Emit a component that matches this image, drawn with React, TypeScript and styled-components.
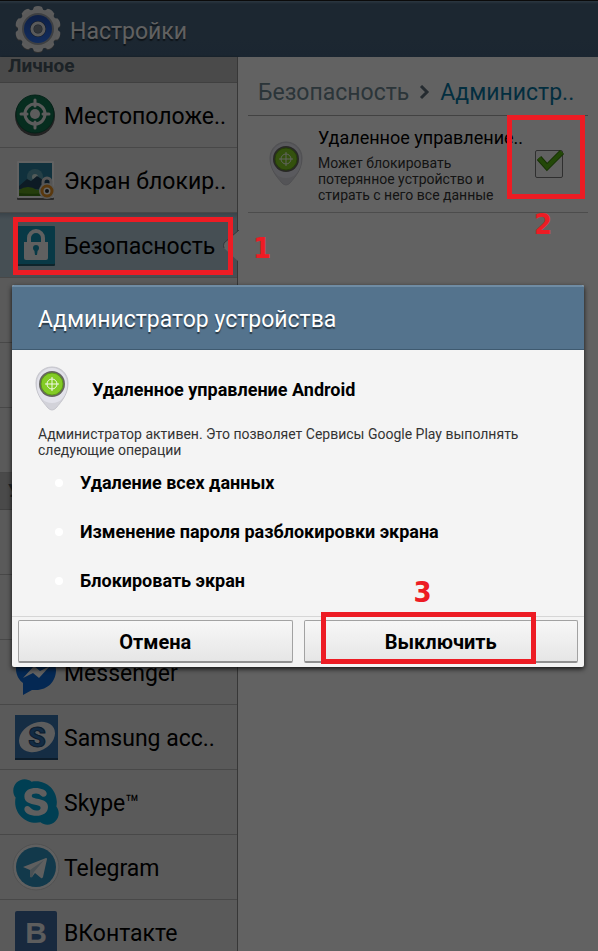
import React from "react";
import styled, { createGlobalStyle, css } from "styled-components";
import { FaSkype } from "react-icons/fa";

const GlobalStyle = createGlobalStyle`
  * { box-sizing: border-box; }
  body { margin: 0; font-family: Roboto, "Noto Sans", sans-serif; background: #f5f5f5; }
  h1, h2, p, ul { margin: 0; padding: 0; font-weight: 400; }
`;

const Screen = styled.div`
  position: relative;
  display: flex;
  flex-direction: column;
  height: 100vh;
  min-height: 600px;
  overflow: hidden;
`;

const TopBar = styled.header`
  display: flex;
  flex: none;
  align-items: center;
  gap: 8px;
  height: 57px;
  padding: 0 14px;
  border-top: 1px solid #1c1c1c;
  background: linear-gradient(#6d8aa2 0, #48637b 3px, #45607a 100%);
  color: #f2f2f2;
`;

const AppTitle = styled.h1`
  padding-top: 6px;
  font-size: 23px;
  line-height: 28px;
  text-shadow: 0 2px 1px rgba(0, 0, 0, 0.5);
`;

const Columns = styled.div`
  display: flex;
  flex: 1;
  min-height: 0;
`;

const Sidebar = styled.nav`
  flex: 0 0 238px;
  background: #e2e2e2;
  border-right: 1px solid #8a8a8a;
  box-shadow: 1px 0 2px rgba(0, 0, 0, 0.35);
`;

const SectionTitle = styled.h2<{ $clipped?: boolean }>`
  display: flex;
  align-items: ${(p) => (p.$clipped ? "flex-end" : "center")};
  height: ${(p) => (p.$clipped ? 26 : 37)}px;
  padding: 0 8px ${(p) => (p.$clipped ? 4 : 0)}px;
  background: #b8b8b8;
  border-bottom: 1px solid #a0a0a0;
  color: #46555f;
  font-size: 19px;
  font-weight: 700;
  line-height: 24px;
`;

const NavRow = styled.a<{ $selected?: boolean }>`
  position: relative;
  display: flex;
  align-items: center;
  height: 65px;
  padding-left: 12px;
  border-bottom: 1px solid #b4b4b4;
  color: #000;
  font-size: 23px;
  line-height: 28px;
  text-decoration: none;
  ${(p) =>
    p.$selected &&
    css`
      background: linear-gradient(#93a9b7, #aec5d3 6px);
    `}
`;

const RowIcon = styled.span`
  display: flex;
  flex: none;
  width: 52px;
  svg { display: block; }
`;

const RowLabel = styled.span`
  padding-top: 4px;
`;

const Notch = styled.svg`
  position: absolute;
  right: -2px;
  top: 17px;
`;

const Content = styled.main`
  flex: 1;
  min-width: 0;
  padding: 12px 10px;
  background: #f6f6f6;
`;

const Breadcrumb = styled.nav`
  display: flex;
  align-items: center;
  gap: 10px;
  height: 47px;
  padding: 2px 0 0 10px;
  border-bottom: 1px solid #a5a5a5;
  font-size: 23px;
  line-height: 28px;
  color: #6c8490;
  a { color: inherit; text-decoration: none; }
`;

const Current = styled.span`
  color: #08749f;
`;

const AdminRow = styled.label`
  display: flex;
  align-items: center;
  height: 97px;
  padding: 0 25px 0 21px;
  border-bottom: 1px solid #bdbdbd;
`;

const AdminText = styled.span`
  flex: 1;
  min-width: 0;
  padding-left: 15px;
  padding-bottom: 2px;
  white-space: nowrap;
`;

const AdminName = styled.span`
  display: block;
  font-size: 18px;
  line-height: 28px;
  color: #000;
`;

const AdminNote = styled.span`
  display: block;
  padding-top: 3px;
  font-size: 14px;
  line-height: 16px;
  color: #333;
  white-space: normal;
  max-width: 184px;
`;

const CheckWrap = styled.span`
  position: relative;
  display: block;
  flex: none;
  width: 28px;
  height: 28px;
  svg { position: absolute; left: 2px; top: -1px; pointer-events: none; }
`;

const Check = styled.input`
  appearance: none;
  display: block;
  width: 28px;
  height: 28px;
  margin: 0;
  border: 1px solid #777;
  border-radius: 2px;
  background: #f2f2f2;
`;

const Scrim = styled.div`
  position: absolute;
  inset: 0;
  z-index: 1;
  display: flex;
  align-items: center;
  padding: 1px 14px 0 12px;
  background: rgba(0, 0, 0, 0.6);
`;

const Dialog = styled.section`
  flex: 1;
  border-radius: 2px;
  background: #f4f4f4;
  box-shadow: 0 2px 5px rgba(0, 0, 0, 0.8);
`;

const DialogTitle = styled.h2`
  display: flex;
  align-items: center;
  height: 65px;
  padding: 2px 26px 0;
  border-top: 2px solid #6f8ca4;
  border-bottom: 1px solid #3f5a70;
  border-radius: 2px 2px 0 0;
  background: #54738d;
  color: #fff;
  font-size: 23px;
  text-shadow: 0 2px 1px rgba(0, 0, 0, 0.5);
`;

const DialogBody = styled.div`
  padding: 17px 26px 11px 23px;
`;

const AppLine = styled.div`
  display: flex;
  align-items: center;
  gap: 23px;
  height: 46px;
  font-size: 18px;
  font-weight: 700;
  padding-bottom: 2px;
`;

const Explanation = styled.p`
  padding: 13px 0 0 3px;
  color: #333;
  font-size: 14px;
  line-height: 16px;
`;

const Operations = styled.ul`
  list-style: none;
`;

const Operation = styled.li`
  display: flex;
  align-items: center;
  gap: 17px;
  height: 49px;
  padding-left: 20px;
  font-size: 18px;
  font-weight: 700;
  &::before {
    content: "";
    width: 8px;
    height: 8px;
    border-radius: 50%;
    background: #fff;
  }
`;

const Actions = styled.div`
  display: grid;
  grid-template-columns: 1fr 1fr;
  gap: 11px;
  padding: 3px 6px 4px;
  border-top: 1px solid #d6d6d6;
`;

const Action = styled.button`
  position: relative;
  height: 43px;
  padding: 2px 0 0;
  border: 1px solid #a2a2a2;
  border-bottom: 2px solid #909090;
  border-radius: 2px;
  background: linear-gradient(#f7f7f7, #e6e6e6);
  color: #000;
  font: 700 20px Roboto, "Noto Sans", sans-serif;
`;

const marks = {
  row: css`left: 13px; right: 4px; top: 4px; height: 58px;`,
  check: css`left: -28px; top: -35px; width: 78px; height: 84px;`,
  action: css`left: 16px; right: 41px; top: -9px; height: 52px;`,
};

const digits = {
  row: css`left: 253px; top: 18px;`,
  check: css`left: -1px; top: 57px;`,
  action: css`left: 109px; top: -46px;`,
};

const Frame = styled.span<{ $at: keyof typeof marks }>`
  position: absolute;
  z-index: 3;
  border: 5px solid #ed1c24;
  pointer-events: none;
  ${(p) => marks[p.$at]}
`;

const Digit = styled.span<{ $at: keyof typeof digits }>`
  position: absolute;
  z-index: 3;
  color: #ed1c24;
  font: 700 29px/34px "DejaVu Sans Condensed", "DejaVu Sans", sans-serif;
  pointer-events: none;
  ${(p) => digits[p.$at]}
`;

function Mark({ at, n }: { at: keyof typeof marks; n: number }) {
  return (
    <>
      <Frame $at={at} />
      <Digit $at={at}>{n}</Digit>
    </>
  );
}

const teeth = Array.from({ length: 10 }, (_, i) => (
  <path key={i} d="M-6-17L-4-22q4-2 8 0l2 5z" transform={`rotate(${i * 36})`} />
));

const GearIcon = () => (
  <svg width="48" height="48" viewBox="-24 -24 48 48">
    <defs>
      <linearGradient id="hub" x1="0" y1="0" x2="0" y2="1">
        <stop offset="0" stopColor="#234fae" />
        <stop offset="1" stopColor="#2f70e8" />
      </linearGradient>
    </defs>
    <g fill="#777" transform="translate(0 1)">{teeth}</g>
    <g fill="#e6e6e6">{teeth}</g>
    <circle r="20" fill="#e2e2e2" />
    <circle r="16" fill="#9a9fa6" />
    <circle r="14" fill="url(#hub)" />
    <circle r="8" fill="#3b4a63" />
    <circle r="6" fill="none" stroke="#e4e4e4" strokeWidth="3" />
    <circle r="4" fill="#7d8690" />
  </svg>
);

const LocationIcon = () => (
  <svg width="46" height="46" viewBox="0 0 46 46">
    <circle cx="23" cy="24" r="20" fill="#555" />
    <circle cx="23" cy="22" r="19" fill="#11714f" stroke="#0b543b" />
    <g fill="none" stroke="#e5e5e5" strokeWidth="3" strokeLinecap="round">
      <circle cx="23" cy="22" r="10" />
      <path d="M23 8v6M23 30v6M9 22h6M31 22h6" />
    </g>
    <circle cx="23" cy="22" r="5" fill="#e5e5e5" />
  </svg>
);

const LockScreenIcon = () => (
  <svg width="46" height="46" viewBox="0 0 46 46">
    <rect x="5" y="5" width="37" height="38" rx="1" fill="#666" />
    <rect x="5" y="4" width="37" height="37" rx="1" fill="#f4f4f4" />
    <rect x="7" y="6" width="33" height="33" fill="#2a7c99" />
    <circle cx="23" cy="20" r="8" fill="#5c9fae" />
    <circle cx="23" cy="20" r="3" fill="#d0e4df" />
    <path d="M7 29l8-7 4 2 6-5 6 4 4-2 5 5v6H7z" fill="#21455d" />
    <path d="M7 33q9-6 18 0l15-3v9H7z" fill="#5d9a20" />
    <path d="M7 36q12 2 33-1v4H7z" fill="#407916" />
    <path d="M31 28v-3a4 4 0 0 1 8 0v3" fill="none" stroke="#d5d5d5" strokeWidth="3" />
    <circle cx="35" cy="34" r="8" fill="#ddd" />
    <circle cx="35" cy="34" r="5" fill="#fff" stroke="#df8d24" strokeWidth="3" />
    <circle cx="35" cy="34" r="2" fill="#333" />
  </svg>
);

const SecurityIcon = () => (
  <svg width="46" height="46" viewBox="0 0 46 46">
    <rect x="4" y="5" width="39" height="39" rx="1" fill="#225b6b" />
    <rect x="4" y="4" width="39" height="38" rx="1" fill="#1690ae" />
    <path d="M17 21v-5a7 7 0 0 1 14 0v5" fill="none" stroke="#f0f0f0" strokeWidth="4" />
    <path d="M12 20h24v16q0 2-2 2H14q-2 0-2-2z" fill="#f0f0f0" />
    <circle cx="24" cy="26" r="3" fill="#1690ae" />
    <path d="M22 26h4l-1 7h-2z" fill="#1690ae" />
  </svg>
);

const MessengerIcon = () => (
  <svg width="46" height="46" viewBox="0 0 46 46">
    <path d="M24 2C12 2 4 10 4 20c0 6 3 11 7 14v12l9-5q2 0 4 0c12 0 20-9 20-20S36 2 24 2z" fill="#0a64cf" />
    <path d="M11 29L22 17l6 5 10-5-11 12-6-5z" fill="#f4f4f4" />
  </svg>
);

const SamsungIcon = () => (
  <svg width="46" height="46" viewBox="0 0 46 46">
    <rect x="3" y="3" width="43" height="43" fill="#204869" />
    <rect x="3" y="1" width="43" height="43" fill="#3570ab" />
    <ellipse cx="25" cy="23" rx="19" ry="14" fill="#e8e8e8" transform="rotate(-28 25 23)" />
    <text x="25" y="33" textAnchor="middle" fontFamily="Roboto, sans-serif" fontWeight="900" fontSize="28" fill="#2d6cab" stroke="#1c456e">S</text>
  </svg>
);

const SkypeIcon = () => (
  <svg width="48" height="48" viewBox="0 0 48 48">
    <circle cx="24" cy="24" r="15" fill="#eee" />
    <FaSkype x="-2" y="-2" size={52} color="#009fcf" />
  </svg>
);

const TelegramIcon = () => (
  <svg width="48" height="48" viewBox="0 0 48 48">
    <circle cx="24" cy="24" r="23" fill="#f0f0f0" stroke="#c9c9c9" />
    <circle cx="24" cy="24" r="20" fill="#2d8ebb" />
    <path d="M11 24l23-9q1 0 1 1l-4 18q-1 2-2 1l-6-5-3 4q-2 1-2-1v-6z" fill="#eee" />
    <path d="M18 27l14-10-10 12-2 5q-2 1-2-1z" fill="#b9cbd5" />
  </svg>
);

const VkIcon = () => (
  <svg width="46" height="46" viewBox="0 0 46 46">
    <rect x="3" y="2" width="42" height="43" rx="2" fill="#3e669c" />
    <text x="24" y="34" textAnchor="middle" fontFamily="Liberation Sans, sans-serif" fontWeight="700" fontSize="30" fill="#e8e8e8">B</text>
  </svg>
);

const PinIcon = () => (
  <svg width="34" height="46" viewBox="0 0 34 46">
    <path d="M17 1C8 1 1 8 1 17c0 11 6 18 12 25q4 4 8 0c6-7 12-14 12-25C33 8 26 1 17 1z" fill="#d2d2d9" stroke="#c5c5cc" />
    <path d="M17 2C9 2 2 9 2 17v5q3 15 15 15t15-15v-5C32 9 25 2 17 2z" fill="#e2e2ea" />
    <circle cx="17" cy="18" r="13" fill="#65655f" />
    <circle cx="17" cy="18" r="11" fill="#83cb25" stroke="#5d9c16" />
    <g fill="none" stroke="#f2f8e9">
      <circle cx="17" cy="18" r="5" />
      <path d="M17 11v14M10 18h14" />
    </g>
  </svg>
);

const Chevron = () => (
  <svg width="11" height="16" viewBox="0 0 11 16">
    <path d="M2 1l6 6-6 6" fill="none" stroke="#5c6d78" strokeWidth="3" />
  </svg>
);

type Item = { label: string; icon?: React.ReactNode; selected?: boolean };

const personal: Item[] = [
  { label: "Местоположе..", icon: <LocationIcon /> },
  { label: "Экран блокир..", icon: <LockScreenIcon /> },
  { label: "Безопасность", icon: <SecurityIcon />, selected: true },
  { label: "" },
  { label: "" },
  { label: "" },
];

const accounts: Item[] = [
  { label: "" },
  { label: "" },
  { label: "Messenger", icon: <MessengerIcon /> },
  { label: "Samsung acc..", icon: <SamsungIcon /> },
  { label: "Skype™", icon: <SkypeIcon /> },
  { label: "Telegram", icon: <TelegramIcon /> },
  { label: "ВКонтакте", icon: <VkIcon /> },
];

const renderRow = (item: Item, i: number) => (
  <NavRow key={i} href="#" $selected={item.selected}>
    <RowIcon>{item.icon}</RowIcon>
    <RowLabel>{item.label}</RowLabel>
    {item.selected && (
      <>
        <Notch width="16" height="32" viewBox="0 0 16 32">
          <path d="M16 0L1 13q-1 3 0 5l15 14z" fill="#f6f6f6" />
          <path d="M16 0L1 13q-1 3 0 5" fill="none" stroke="#7d8d96" />
        </Notch>
        <Mark at="row" n={1} />
      </>
    )}
  </NavRow>
);

export default function App() {
  return (
    <Screen>
      <GlobalStyle />
      <TopBar>
        <GearIcon />
        <AppTitle>Настройки</AppTitle>
      </TopBar>
      <Columns>
        <Sidebar>
          <SectionTitle $clipped>Личное</SectionTitle>
          {personal.map(renderRow)}
          <SectionTitle>У</SectionTitle>
          {accounts.map(renderRow)}
        </Sidebar>
        <Content>
          <Breadcrumb>
            <a href="#">Безопасность</a>
            <Chevron />
            <Current>Администр..</Current>
          </Breadcrumb>
          <AdminRow>
            <PinIcon />
            <AdminText>
              <AdminName>Удаленное управление..</AdminName>
              <AdminNote>Может блокировать потерянное устройство и стирать с него все данные</AdminNote>
            </AdminText>
            <CheckWrap>
              <Check type="checkbox" defaultChecked />
              <svg width="28" height="24" viewBox="0 0 28 24">
                <path d="M2 9l8 9L25 3" fill="none" stroke="#397b0c" strokeWidth="6" />
                <path d="M2 9l8 9L25 3" fill="none" stroke="#58b414" strokeWidth="4" />
              </svg>
              <Mark at="check" n={2} />
            </CheckWrap>
          </AdminRow>
        </Content>
      </Columns>
      <Scrim>
        <Dialog role="dialog" aria-labelledby="dialog-title">
          <DialogTitle id="dialog-title">Администратор устройства</DialogTitle>
          <DialogBody>
            <AppLine>
              <PinIcon />
              Удаленное управление Android
            </AppLine>
            <Explanation>
              Администратор активен. Это позволяет Сервисы Google Play выполнять следующие операции
            </Explanation>
            <Operations>
              <Operation>Удаление всех данных</Operation>
              <Operation>Изменение пароля разблокировки экрана</Operation>
              <Operation>Блокировать экран</Operation>
            </Operations>
          </DialogBody>
          <Actions>
            <Action>Отмена</Action>
            <Action>
              Выключить
              <Mark at="action" n={3} />
            </Action>
          </Actions>
        </Dialog>
      </Scrim>
    </Screen>
  );
}
